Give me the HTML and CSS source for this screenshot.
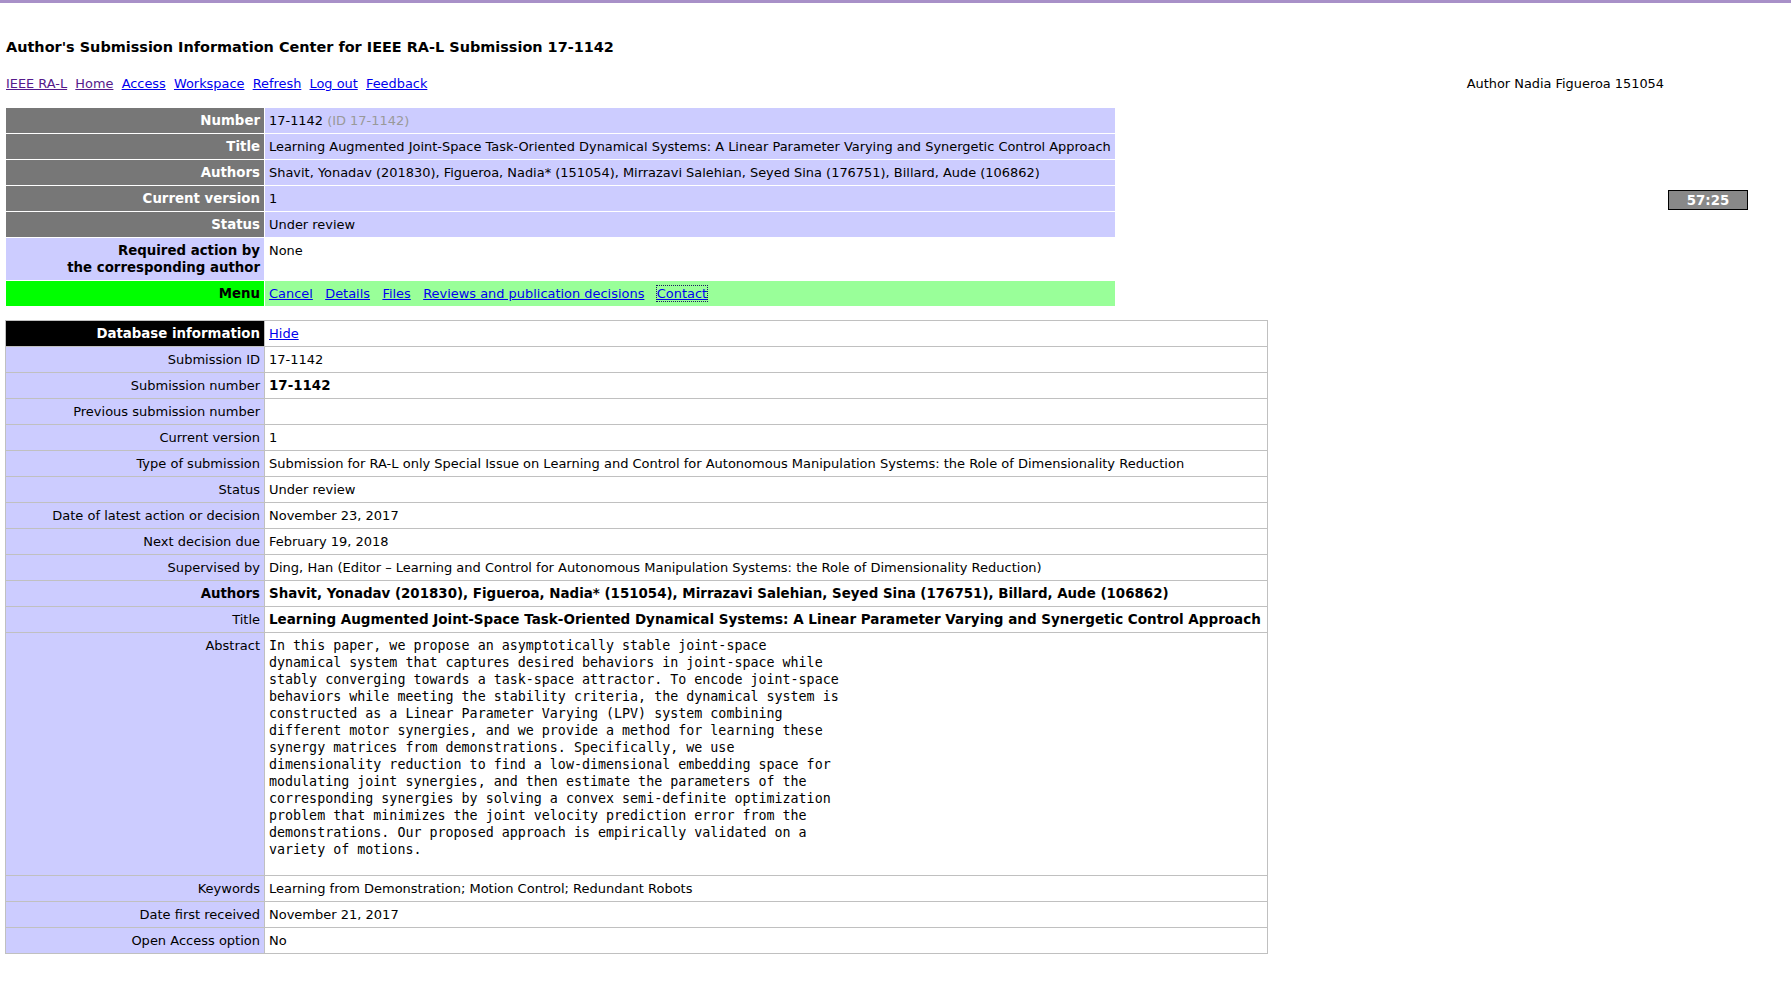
FILE: index.html
```html
<!DOCTYPE html>
<html>
<head>
<meta charset="utf-8">
<title>Author's Submission Information Center</title>
<link rel="stylesheet" href="styles.css">
</head>
<body>
<div class="topbar"></div>
<div class="page">
  <h1 class="heading">Author's Submission Information Center for IEEE RA-L Submission 17-1142</h1>
  <div class="navrow">
    <div class="nav"><a class="visited" href="#">IEEE RA-L</a>&nbsp; <a class="visited" href="#">Home</a>&nbsp; <a href="#">Access</a>&nbsp; <a href="#">Workspace</a>&nbsp; <a href="#">Refresh</a>&nbsp; <a href="#">Log out</a>&nbsp; <a href="#">Feedback</a></div>
    <div class="who">Author Nadia Figueroa 151054</div>
  </div>

  <table class="summary">
    <tr><th>Number</th><td>17-1142 <span class="dim">(ID 17-1142)</span></td></tr>
    <tr><th>Title</th><td>Learning Augmented Joint-Space Task-Oriented Dynamical Systems: A Linear Parameter Varying and Synergetic Control Approach</td></tr>
    <tr><th>Authors</th><td>Shavit, Yonadav (201830), Figueroa, Nadia* (151054), Mirrazavi Salehian, Seyed Sina (176751), Billard, Aude (106862)</td></tr>
    <tr><th>Current version</th><td>1</td></tr>
    <tr><th>Status</th><td>Under review</td></tr>
    <tr class="required"><th>Required action by<br>the corresponding author</th><td>None</td></tr>
    <tr class="menu"><th>Menu</th><td><a href="#">Cancel</a>&nbsp;&nbsp; <a href="#">Details</a>&nbsp;&nbsp; <a href="#">Files</a>&nbsp;&nbsp; <a href="#">Reviews and publication decisions</a>&nbsp;&nbsp; <a class="focused" href="#">Contact</a></td></tr>
  </table>

  <table class="db">
    <tr class="dbhead"><th>Database information</th><td><a href="#">Hide</a></td></tr>
    <tr><th>Submission ID</th><td>17-1142</td></tr>
    <tr><th>Submission number</th><td><b>17-1142</b></td></tr>
    <tr><th>Previous submission number</th><td></td></tr>
    <tr><th>Current version</th><td>1</td></tr>
    <tr><th>Type of submission</th><td>Submission for RA-L only Special Issue on Learning and Control for Autonomous Manipulation Systems: the Role of Dimensionality Reduction</td></tr>
    <tr><th>Status</th><td>Under review</td></tr>
    <tr><th>Date of latest action or decision</th><td>November 23, 2017</td></tr>
    <tr><th>Next decision due</th><td>February 19, 2018</td></tr>
    <tr><th>Supervised by</th><td>Ding, Han (Editor – Learning and Control for Autonomous Manipulation Systems: the Role of Dimensionality Reduction)</td></tr>
    <tr><th class="strong">Authors</th><td><b>Shavit, Yonadav (201830), Figueroa, Nadia* (151054), Mirrazavi Salehian, Seyed Sina (176751), Billard, Aude (106862)</b></td></tr>
    <tr><th>Title</th><td><b class="wide">Learning Augmented Joint-Space Task-Oriented Dynamical Systems: A Linear Parameter Varying and Synergetic Control Approach</b></td></tr>
    <tr class="abstract"><th>Abstract</th><td><pre>In this paper, we propose an asymptotically stable joint-space
dynamical system that captures desired behaviors in joint-space while
stably converging towards a task-space attractor. To encode joint-space
behaviors while meeting the stability criteria, the dynamical system is
constructed as a Linear Parameter Varying (LPV) system combining
different motor synergies, and we provide a method for learning these
synergy matrices from demonstrations. Specifically, we use
dimensionality reduction to find a low-dimensional embedding space for
modulating joint synergies, and then estimate the parameters of the
corresponding synergies by solving a convex semi-definite optimization
problem that minimizes the joint velocity prediction error from the
demonstrations. Our proposed approach is empirically validated on a
variety of motions.</pre></td></tr>
    <tr><th>Keywords</th><td>Learning from Demonstration; Motion Control; Redundant Robots</td></tr>
    <tr><th>Date first received</th><td>November 21, 2017</td></tr>
    <tr><th>Open Access option</th><td>No</td></tr>
  </table>
</div>
<div class="clock">57:25</div>
</body>
</html>
```
FILE: styles.css
```css
html, body {
  margin: 0;
  padding: 0;
  background: #ffffff;
}
body {
  font-family: "DejaVu Sans", "Liberation Sans", sans-serif;
  font-size: 13px;
  line-height: 17px;
  color: #000;
}
b { font-size: 13.4px; }
b.wide { font-size: 13.5px; }
a { color: #0000ee; text-decoration: underline; }
a.visited { color: #551a8b; }
a.focused { outline: 1px dotted #1a1a60; }

.topbar {
  height: 3px;
  background: #a890c8;
}
.page {
  padding: 36px 0 0 6px;
}
.heading {
  margin: 0;
  font-size: 14.45px;
  line-height: 17px;
  font-weight: bold;
}
.navrow {
  display: flex;
  justify-content: space-between;
  margin-top: 19px;
  padding-right: 127px;
  font-size: 12.9px;
}
.summary {
  margin: 15px 0 0 -1px;
  border-collapse: separate;
  border-spacing: 1px;
}
.summary th, .summary td {
  padding: 4px 4px 4px 4px;
  line-height: 17px;
  vertical-align: middle;
  white-space: nowrap;
}
.summary th {
  width: 251px;
  text-align: right;
  background: #777777;
  color: #ffffff;
  font-weight: bold;
  font-size: 13.33px;
  padding-left: 3px;
}
.summary td {
  background: #ccccff;
  text-align: left;
  font-size: 12.95px;
}
.summary .dim { color: #999999; }
.summary .required th {
  background: #ccccff;
  color: #000;
  vertical-align: top;
}
.summary .required td {
  background: #ffffff;
  vertical-align: top;
}
.summary .menu th {
  background: #00ff00;
  color: #000;
}
.summary .menu td {
  background: #99ff99;
}

.db {
  margin: 13px 0 0 -1px;
  border-collapse: collapse;
  width: 1263px;
}
.db th, .db td {
  border: 1px solid #c0c0c0;
  padding: 4px 4px 4px 4px;
  line-height: 17px;
  vertical-align: top;
  text-align: left;
}
.db th {
  width: 250px;
  text-align: right;
  font-weight: normal;
  background: #ccccff;
}
.db th.strong { font-weight: bold; font-size: 13.33px; }
.db .dbhead th {
  background: #000000;
  color: #ffffff;
  font-weight: bold;
  font-size: 13.33px;
}
.db pre {
  margin: 0 0 13px 0;
  font-family: "DejaVu Sans Mono", "Liberation Mono", monospace;
  font-size: 13.33px;
  line-height: 17px;
}
.db .abstract td { padding-bottom: 4px; }

.clock {
  position: absolute;
  left: 1668px;
  top: 190px;
  width: 78px;
  height: 18px;
  line-height: 19px;
  border: 1px solid #000;
  background: #888888;
  color: #ffffff;
  font-weight: bold;
  font-size: 13.33px;
  text-align: center;
}
```
